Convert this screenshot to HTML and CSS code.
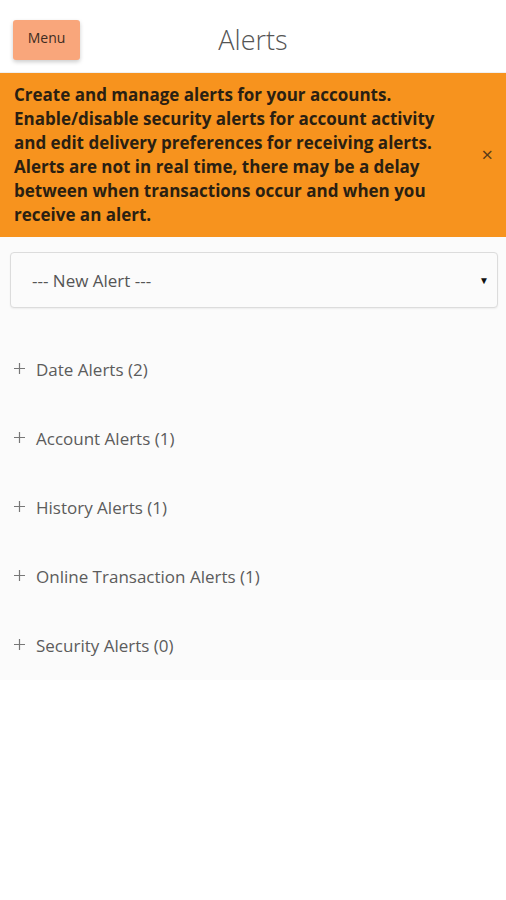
FILE: index.html
```html
<!DOCTYPE html>
<html lang="en">
<head>
    <meta charset="UTF-8">
    <meta name="viewport" content="width=device-width, initial-scale=1.0">
    <title>Alerts</title>
    <link rel="stylesheet" href="styles.css">
</head>
<body>

    <div class="topbar">
        <button type="button" class="menu-btn">Menu</button>
        <h2 class="title">Alerts</h2>
    </div>

    <div class="notice">
        <p>Create and manage alerts for your accounts.<br>
        Enable/disable security alerts for account activity<br>
        and edit delivery preferences for receiving alerts.<br>
        Alerts are not in real time, there may be a delay<br>
        between when transactions occur and when you<br>
        receive an alert.</p>
        <span class="close">&times;</span>
    </div>

    <div class="content">
        <div class="select-box">
            <span>--- New Alert ---</span>
            <span class="arrow">&#9660;</span>
        </div>

        <ul class="alert-list">
            <li><svg class="plus" width="11" height="11" viewBox="0 0 11 11"><path d="M5.5 0v11M0 5.5h11" stroke="#777" stroke-width="1.2" fill="none"/></svg>Date Alerts (2)</li>
            <li><svg class="plus" width="11" height="11" viewBox="0 0 11 11"><path d="M5.5 0v11M0 5.5h11" stroke="#777" stroke-width="1.2" fill="none"/></svg>Account Alerts (1)</li>
            <li><svg class="plus" width="11" height="11" viewBox="0 0 11 11"><path d="M5.5 0v11M0 5.5h11" stroke="#777" stroke-width="1.2" fill="none"/></svg>History Alerts (1)</li>
            <li><svg class="plus" width="11" height="11" viewBox="0 0 11 11"><path d="M5.5 0v11M0 5.5h11" stroke="#777" stroke-width="1.2" fill="none"/></svg>Online Transaction Alerts (1)</li>
            <li><svg class="plus" width="11" height="11" viewBox="0 0 11 11"><path d="M5.5 0v11M0 5.5h11" stroke="#777" stroke-width="1.2" fill="none"/></svg>Security Alerts (0)</li>
        </ul>
    </div>

</body>
</html>
```

FILE: styles.css
```css
body {
    font-family: "Open Sans", Arial, sans-serif;
    background: #ffffff;
    margin: 0;
    padding: 0;
    color: #555;
}

.topbar {
    height: 73px;
    display: flex;
    align-items: center;
    position: relative;
    border-bottom: 1px solid #f0f0f0;
    box-sizing: border-box;
}

.menu-btn {
    margin-left: 13px;
    margin-top: 7px;
    width: 67px;
    height: 40px;
    background-color: #f9a67b;
    color: #3e2c22;
    border: none;
    border-radius: 3px;
    box-shadow: 0 2px 4px rgba(0, 0, 0, 0.2);
    font-family: "Open Sans", Arial, sans-serif;
    font-size: 14px;
    font-weight: 500;
    padding: 0 0 4px;
    z-index: 1;
}

.title {
    position: absolute;
    left: 0;
    right: 0;
    top: 21px;
    margin: 0;
    text-align: center;
    font-size: 27px;
    font-weight: 300;
    line-height: 38px;
    color: #555;
}

.notice {
    background-color: #f7931e;
    display: flex;
    align-items: center;
    padding: 10px 14px;
    height: 164px;
    box-sizing: border-box;
}

.notice p {
    margin: 0;
    flex: 1;
    font-size: 17px;
    font-weight: 700;
    line-height: 24px;
    color: #2a1f12;
    white-space: nowrap;
}

.close {
    font-size: 20px;
    color: #5a3a18;
    margin-right: -1px;
    margin-bottom: 2px;
}

.content {
    background: #fbfbfb;
    padding-top: 15px;
}

.select-box {
    margin: 0 8px 0 10px;
    height: 56px;
    border: 1px solid #dcdcdc;
    border-radius: 4px;
    box-shadow: 0 1px 2px rgba(0, 0, 0, 0.06);
    background: #fbfbfb;
    display: flex;
    align-items: center;
    justify-content: space-between;
    padding: 0 8px 0 21px;
    box-sizing: border-box;
    font-size: 17px;
    color: #555;
}

.arrow {
    font-size: 10px;
    color: #111;
}

.alert-list {
    list-style: none;
    margin: 0;
    padding: 27px 0 0;
}

.alert-list li {
    height: 69px;
    display: flex;
    align-items: center;
    padding-left: 14px;
    font-size: 17px;
    color: #5c5c5c;
}

.plus {
    margin-right: 11px;
    margin-top: -3px;
}
```
